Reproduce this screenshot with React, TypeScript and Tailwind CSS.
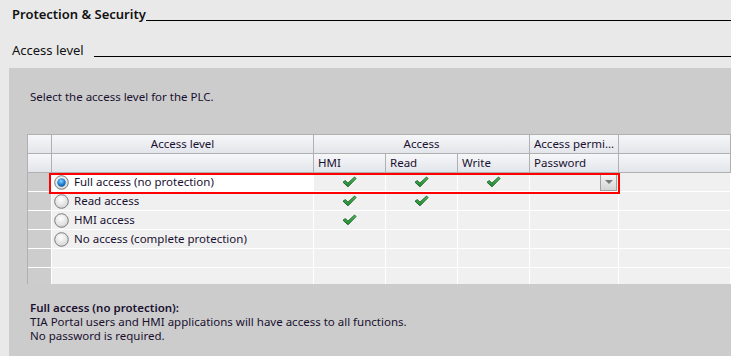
import { JSX } from "react";

const font = "font-['Noto_Sans',sans-serif]";

const Check = (): JSX.Element => (
  <svg width="15" height="12" viewBox="0 0 15 12">
    <defs>
      <linearGradient id="chk" x1="0" y1="0" x2="0" y2="1">
        <stop offset="0" stopColor="#4cc45a" />
        <stop offset="1" stopColor="#1f8a2e" />
      </linearGradient>
    </defs>
    <path
      d="M1 6.2 L3.4 4.6 L5.9 7.2 L12.6 1 L14 2.6 L6 10.8 Z"
      fill="url(#chk)"
      stroke="#14561f"
      strokeWidth="0.9"
      strokeLinejoin="round"
    />
  </svg>
);

const Radio = ({ checked }: { checked?: boolean }): JSX.Element => (
  <svg width="15" height="15" viewBox="0 0 15 15">
    <defs>
      <radialGradient id="rOff" cx="0.45" cy="0.35" r="0.7">
        <stop offset="0" stopColor="#ffffff" />
        <stop offset="1" stopColor="#d2d2d2" />
      </radialGradient>
      <radialGradient id="rOn" cx="0.45" cy="0.35" r="0.6">
        <stop offset="0" stopColor="#8fd3ff" />
        <stop offset="0.6" stopColor="#2a8ad8" />
        <stop offset="1" stopColor="#0b5aa8" />
      </radialGradient>
    </defs>
    <circle cx="7.5" cy="7.5" r="6.8" fill="url(#rOff)" stroke="#7c7c7c" strokeWidth="1" />
    {checked && <circle cx="7.5" cy="7.5" r="4.2" fill="url(#rOn)" />}
  </svg>
);

const Header = ({ title, bold }: { title: string; bold?: boolean }): JSX.Element => (
  <div className="flex items-end pl-3 h-[22px]">
    <span className={`leading-[15px] text-[#111] ${bold ? "font-semibold text-[13px]" : "text-[13px]"}`}>{title}</span>
    <div className={`flex-1 border-b border-black mb-[1px] ${bold ? "ml-0" : "ml-[10px]"}`} />
  </div>
);

const hdr =
  "h-[19px] border-r border-b border-[#b0b0b0] bg-gradient-to-b from-[#f6f7f9] to-[#e2e5ea] text-[11.5px] leading-[18px] text-[#1a1030] truncate";
const rowHead = "h-[19px] border-r border-b border-white bg-[#cdcdcd]";
const cell = "h-[19px] border-r border-b border-white bg-[#f0f0f0] flex items-center justify-center";

const rows = [
  { label: "Full access (no protection)", hmi: true, read: true, write: true, sel: true },
  { label: "Read access", hmi: true, read: true, write: false },
  { label: "HMI access", hmi: true, read: false, write: false },
  { label: "No access (complete protection)", hmi: false, read: false, write: false },
];

export default function App(): JSX.Element {
  return (
    <div className={`w-[731px] h-[356px] bg-[#e9e9e9] overflow-hidden flex flex-col ${font}`}>
      <Header title="Protection & Security" bold />
      <div className="h-[14px]" />
      <Header title="Access level" />
      <div className="h-[10px]" />
      <div className="ml-[9px] flex-1 bg-[#cccccc] pt-[22px]">
        <p className="pl-[21px] text-[11.5px] leading-[14px] text-[#1a1030]">Select the access level for the PLC.</p>
        <div className="relative mt-[30px] ml-[18px] h-[150px] overflow-hidden border-l border-t border-[#b0b0b0]">
          <div className="grid grid-cols-[24px_262px_72px_72px_72px_89px_1fr]">
            <div className={hdr} />
            <div className={`${hdr} text-center`}>Access level</div>
            <div className={`${hdr} col-span-3 text-center`}>Access</div>
            <div className={`${hdr} pl-1`}>Access permi...</div>
            <div className={hdr} />

            <div className={hdr} />
            <div className={hdr} />
            <div className={`${hdr} pl-1`}>HMI</div>
            <div className={`${hdr} pl-1`}>Read</div>
            <div className={`${hdr} pl-1`}>Write</div>
            <div className={`${hdr} pl-1`}>Password</div>
            <div className={hdr} />

            {rows.map((r) => (
              <div key={r.label} className="contents">
                <div className={`${rowHead} ${r.sel ? "bg-[#c9d3dc]" : ""}`} />
                <div className={`${cell} justify-start gap-[5px] pl-[2px] ${r.sel ? "bg-white" : ""}`}>
                  <Radio checked={r.sel} />
                  <span className="text-[11.5px] leading-[18px] text-[#1a1030]">{r.label}</span>
                </div>
                <div className={`${cell} ${r.sel ? "bg-[#d9dee3]" : ""}`}>{r.hmi && <Check />}</div>
                <div className={`${cell} ${r.sel ? "bg-[#d9dee3]" : ""}`}>{r.read && <Check />}</div>
                <div className={`${cell} ${r.sel ? "bg-[#d9dee3]" : ""}`}>{r.write && <Check />}</div>
                <div className={`${cell} justify-end ${r.sel ? "bg-[#d9dee3]" : ""}`}>
                  {r.sel && (
                    <div className="w-[17px] h-[17px] mr-[1px] border border-[#a0a0a0] bg-gradient-to-b from-[#f4f4f4] to-[#d4d4d4] flex items-center justify-center">
                      <div className="w-0 h-0 border-l-[4px] border-r-[4px] border-t-[4px] border-l-transparent border-r-transparent border-t-[#7a7a7a]" />
                    </div>
                  )}
                </div>
                <div className={cell} />
              </div>
            ))}

            {[0, 1].map((i) => (
              <div key={i} className="contents">
                <div className={rowHead} />
                <div className={cell} />
                <div className={cell} />
                <div className={cell} />
                <div className={cell} />
                <div className={cell} />
                <div className={cell} />
              </div>
            ))}
          </div>
          <div className="absolute left-[21px] top-[38px] w-[571px] h-[21px] border-2 border-[#ff0000] pointer-events-none" />
        </div>
        <div className="pl-[21px] mt-[17px] text-[11.5px] leading-[14px] text-[#1a1030]">
          <p className="font-semibold">Full access (no protection):</p>
          <p>TIA Portal users and HMI applications will have access to all functions.</p>
          <p>No password is required.</p>
        </div>
      </div>
    </div>
  );
}
